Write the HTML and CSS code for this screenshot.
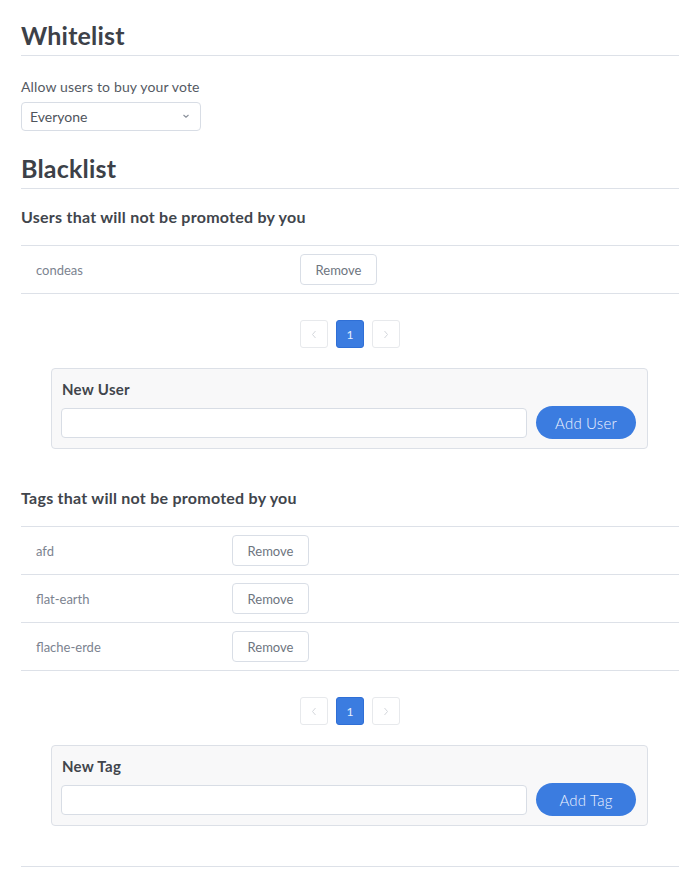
FILE: index.html
```html
<!DOCTYPE html>
<html>
<head>
<meta charset="utf-8">
<link rel="stylesheet" href="styles.css">
</head>
<body>
<div class="page">
  <h2 class="section-title">Whitelist</h2>
  <div class="field">
    <label class="field-label">Allow users to buy your vote</label>
    <div class="select">
      <span>Everyone</span>
      <svg class="chev" width="8" height="6" viewBox="0 0 8 6"><path d="M1.5 2 L4 4.2 L6.5 2" fill="none" stroke="#8a909a" stroke-width="1.1"/></svg>
    </div>
  </div>

  <h2 class="section-title blacklist">Blacklist</h2>

  <h3 class="sub-title users-title">Users that will not be promoted by you</h3>
  <div class="table users">
    <div class="row"><div class="cell name">condeas</div><div class="cell"><button class="btn-remove">Remove</button></div></div>
  </div>
  <div class="pager">
    <span class="page-btn"><svg width="6" height="9" viewBox="0 0 6 9"><path d="M4.5 1 L1.5 4.5 L4.5 8" fill="none" stroke="#d4d7dc" stroke-width="1"/></svg></span>
    <span class="page-btn active">1</span>
    <span class="page-btn"><svg width="6" height="9" viewBox="0 0 6 9"><path d="M1.5 1 L4.5 4.5 L1.5 8" fill="none" stroke="#d4d7dc" stroke-width="1"/></svg></span>
  </div>
  <div class="add-box">
    <div class="add-title">New User</div>
    <div class="add-row">
      <input class="add-input" type="text">
      <button class="btn-add">Add User</button>
    </div>
  </div>

  <h3 class="sub-title tags-title">Tags that will not be promoted by you</h3>
  <div class="table tags">
    <div class="row"><div class="cell name">afd</div><div class="cell"><button class="btn-remove">Remove</button></div></div>
    <div class="row"><div class="cell name">flat-earth</div><div class="cell"><button class="btn-remove">Remove</button></div></div>
    <div class="row"><div class="cell name">flache-erde</div><div class="cell"><button class="btn-remove">Remove</button></div></div>
  </div>
  <div class="pager">
    <span class="page-btn"><svg width="6" height="9" viewBox="0 0 6 9"><path d="M4.5 1 L1.5 4.5 L4.5 8" fill="none" stroke="#d4d7dc" stroke-width="1"/></svg></span>
    <span class="page-btn active">1</span>
    <span class="page-btn"><svg width="6" height="9" viewBox="0 0 6 9"><path d="M1.5 1 L4.5 4.5 L1.5 8" fill="none" stroke="#d4d7dc" stroke-width="1"/></svg></span>
  </div>
  <div class="add-box">
    <div class="add-title">New Tag</div>
    <div class="add-row">
      <input class="add-input" type="text">
      <button class="btn-add">Add Tag</button>
    </div>
  </div>

  <div class="bottom-line"></div>
</div>
</body>
</html>
```
FILE: styles.css
```css
* { box-sizing: border-box; }
html, body { margin: 0; padding: 0; background: #fff; }
body {
  font-family: "Lato", "Open Sans", sans-serif;
  color: #41454c;
}
.page {
  padding: 20px 18px 0 21px;
}
.section-title {
  margin: 0;
  font-size: 25px;
  line-height: 30px;
  font-weight: 700;
  color: #3d4148;
  padding-bottom: 5px;
  border-bottom: 1px solid #dde1e8;
  letter-spacing: 0.2px;
}
.field { padding-top: 22px; }
.field-label {
  display: block;
  font-size: 14px;
  line-height: 17px;
  color: #555a63;
  letter-spacing: 0.15px;
}
.select {
  margin-top: 7px;
  width: 180px;
  height: 29px;
  border: 1px solid #d8dde5;
  border-radius: 4px;
  display: flex;
  align-items: center;
  justify-content: space-between;
  padding: 0 10px 1px 8px;
  font-size: 14px;
  color: #4f545c;
}
.chev { display: block; }
.blacklist { margin-top: 22px; }
.sub-title {
  margin: 0;
  font-size: 16px;
  line-height: 18px;
  font-weight: 700;
  color: #41454c;
  letter-spacing: 0.25px;
}
.users-title { margin-top: 19px; }
.tags-title { margin-top: 40px; }
.table { margin-top: 19px; border-bottom: 1px solid #dde1e8; }
.row {
  display: flex;
  align-items: center;
  height: 48px;
  border-top: 1px solid #dde1e8;
}
.cell { padding: 0 15px; }
.users .name { width: 264px; }
.tags .name { width: 196px; }
.name { font-size: 13px; color: #7c8390; }
.btn-remove {
  width: 77px;
  height: 31px;
  background: #fff;
  border: 1px solid #d9dee6;
  border-radius: 4px;
  font-family: inherit;
  font-size: 13px;
  color: #6e7580;
  padding: 0;
}
.pager {
  display: flex;
  justify-content: center;
  gap: 8px;
  margin-top: 26px;
}
.page-btn {
  width: 28px;
  height: 28px;
  border: 1px solid #e7e9ec;
  border-radius: 3px;
  display: flex;
  align-items: center;
  justify-content: center;
  font-size: 12px;
}
.page-btn.active {
  background: #3b7ce0;
  border-color: #2f6fd6;
  color: #e8efff;
}
.add-box {
  margin: 20px 31px 0 30px;
  background: #f8f8f9;
  border: 1px solid #dce0e7;
  border-radius: 4px;
  padding: 10px 11px 9px 9px;
}
.add-title {
  font-size: 15px;
  line-height: 20px;
  font-weight: 700;
  color: #41454c;
  letter-spacing: 0.3px;
  padding-left: 1px;
}
.add-row {
  display: flex;
  align-items: center;
  gap: 9px;
  margin-top: 7px;
}
.add-input {
  flex: 1;
  height: 30px;
  border: 1px solid #d8dde5;
  border-radius: 4px;
  background: #fff;
  outline: none;
}
.btn-add {
  width: 100px;
  height: 33px;
  border: none;
  border-radius: 17px;
  background: #3b7ce0;
  color: #eef3ff;
  font-family: inherit;
  font-size: 15px;
  font-weight: 300;
  padding: 0;
  letter-spacing: 0.2px;
}
.bottom-line {
  margin-top: 40px;
  border-top: 1px solid #dde1e8;
  height: 6px;
}
```
